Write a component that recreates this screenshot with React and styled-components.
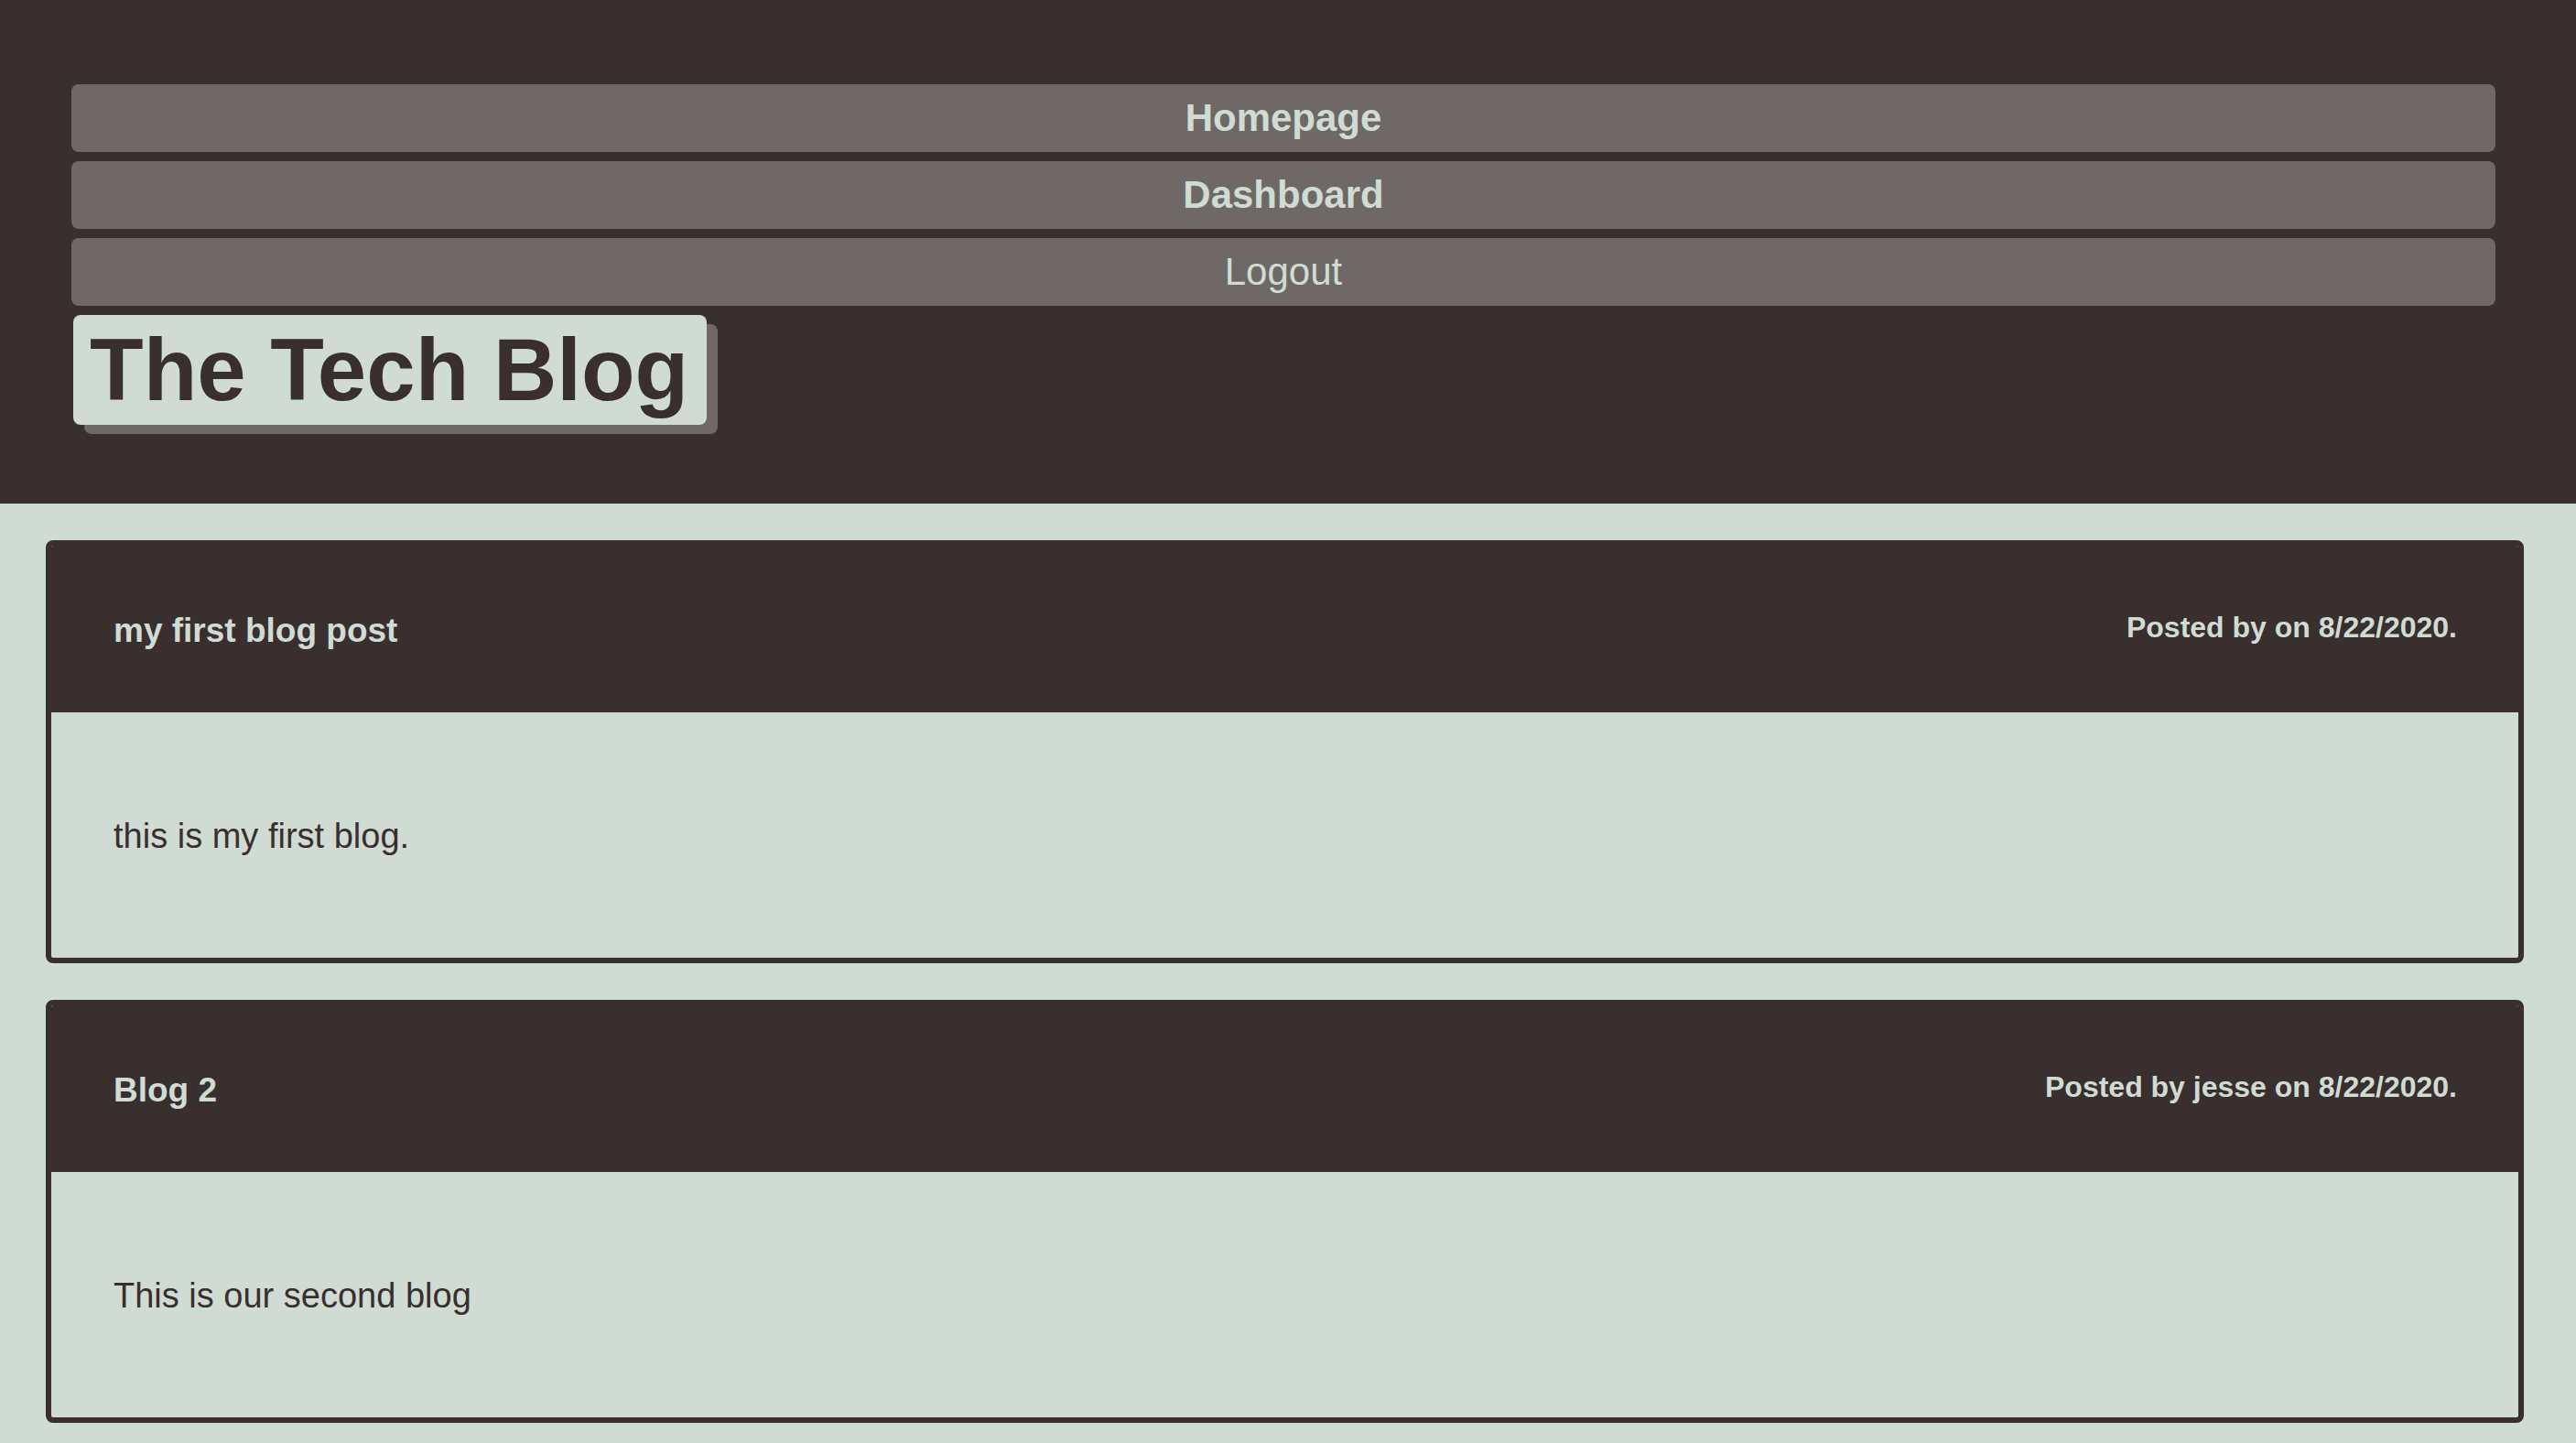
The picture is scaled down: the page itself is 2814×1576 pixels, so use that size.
import React from 'react';
import styled, { createGlobalStyle } from 'styled-components';

const dark = '#382f2e';
const grey = '#6e6966';
const light = '#d0dbd4';

const GlobalStyle = createGlobalStyle`
    html, body {
        margin: 0;
        padding: 0;
        background: ${light};
        font-family: "Liberation Sans", Arial, Helvetica, sans-serif;
    }
`

const Header = styled.header`
    background: ${dark};
    padding: 92px 88px 86px 78px;
    display: flex;
    flex-direction: column;
    gap: 10px;
`

const NavItem = styled.a`
    display: flex;
    align-items: center;
    justify-content: center;
    height: 74px;
    border-radius: 8px;
    background: ${grey};
    color: ${light};
    font-size: 42px;
    font-weight: ${props => (props.$bold ? 700 : 400)};
    text-decoration: none;
    cursor: pointer;
`

const Title = styled.h1`
    align-self: flex-start;
    margin: 0 0 0 2px;
    padding: 5px 20px 5px 18px;
    line-height: 110px;
    font-size: 96px;
    font-weight: 700;
    color: ${dark};
    background: ${light};
    border-radius: 8px;
    box-shadow: 12px 10px 0 ${grey};
`

const Main = styled.main`
    padding: 40px 57px 24px 50px;
    display: flex;
    flex-direction: column;
    gap: 40px;
`

const Card = styled.article`
    border: 6px solid ${dark};
    border-radius: 8px;
    overflow: hidden;
`

const CardHead = styled.div`
    height: 182px;
    background: ${dark};
    color: ${light};
    padding: 0 67px 0 68px;
    display: flex;
    align-items: center;
    justify-content: space-between;
`

const PostTitle = styled.h2`
    margin: 4px 0 0;
    font-size: 37px;
    font-weight: 700;
`

const PostMeta = styled.p`
    margin: 0 0 4px;
    font-size: 32px;
    font-weight: 700;
`

const CardBody = styled.div`
    height: 268px;
    padding: 2px 68px 0;
    box-sizing: border-box;
    display: flex;
    align-items: center;
    color: ${dark};
    font-size: 38px;
`

const posts = [
    { title: 'my first blog post', author: '', date: '8/22/2020', body: 'this is my first blog.' },
    { title: 'Blog 2', author: 'jesse', date: '8/22/2020', body: 'This is our second blog' },
];

const App = () => (
    <>
        <GlobalStyle />
        <Header>
            <NavItem $bold>Homepage</NavItem>
            <NavItem $bold>Dashboard</NavItem>
            <NavItem>Logout</NavItem>
            <Title>The Tech Blog</Title>
        </Header>
        <Main>
            {posts.map((post, key) => (
                <Card key={key}>
                    <CardHead>
                        <PostTitle>{post.title}</PostTitle>
                        <PostMeta>Posted by {post.author} on {post.date}.</PostMeta>
                    </CardHead>
                    <CardBody>{post.body}</CardBody>
                </Card>
            ))}
        </Main>
    </>
);

export default App;
